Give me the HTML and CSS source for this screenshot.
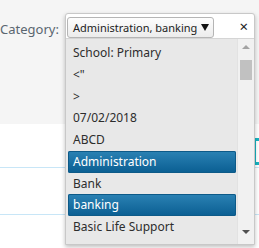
FILE: index.html
```html
<!DOCTYPE html>
<html lang="en">
<head>
    <meta charset="UTF-8">
    <title>Category</title>
    <link rel="stylesheet" href="styles.css">
</head>
<body>
    <div class="page">
        <div class="top">
            <label class="field-label" for="category">Category:</label>
            <div class="picker" id="category">
                <div class="picker-head">
                    <button class="picker-value" type="button">Administration, banking<span class="caret"></span></button>
                    <span class="picker-close">&#215;</span>
                </div>
                <div class="picker-body">
                    <ul class="picker-list">
                        <li>School: Primary</li>
                        <li>&lt;"</li>
                        <li>&gt;</li>
                        <li>07/02/2018</li>
                        <li>ABCD</li>
                        <li class="selected">Administration</li>
                        <li>Bank</li>
                        <li class="selected">banking</li>
                        <li>Basic Life Support</li>
                    </ul>
                    <div class="scrollbar">
                        <span class="arrow up"></span>
                        <span class="thumb"></span>
                        <span class="arrow down"></span>
                    </div>
                </div>
            </div>
        </div>
        <div class="row row-first"><span class="teal-box"></span></div>
        <div class="row row-second"></div>
        <div class="row"></div>
    </div>
</body>
</html>
```

FILE: styles.css
```css
body {
    margin: 0;
    padding: 0;
    background: #fff;
    font-family: "Noto Sans", "Open Sans", sans-serif;
}
.page {
    position: relative;
}
.top {
    position: relative;
    height: 124px;
    background: #f5f5f5;
}
.field-label {
    display: block;
    width: 56px;
    padding-top: 20px;
    text-align: right;
    font-size: 13px;
    color: #5a6670;
}
.picker {
    position: absolute;
    left: 65px;
    top: 13px;
    width: 188px;
    z-index: 2;
    background: #fff;
    border: 1px solid #c8c8c8;
    border-radius: 3px 3px 0 0;
    box-shadow: 0 2px 4px rgba(0, 0, 0, 0.25);
}
.picker-head {
    display: flex;
    align-items: center;
    justify-content: space-between;
    height: 24px;
    padding: 0 0 0 1px;
}
.picker-value {
    display: flex;
    align-items: center;
    height: 21px;
    margin-top: 3px;
    padding: 0 4px 0 5px;
    border: 1px solid #b5b5b5;
    border-radius: 3px;
    background: linear-gradient(#fdfdfd, #ececec);
    font-family: inherit;
    font-size: 11px;
    color: #222;
    line-height: 18px;
}
.caret {
    width: 0;
    height: 0;
    margin-left: 4px;
    border-left: 4px solid transparent;
    border-right: 4px solid transparent;
    border-top: 7px solid #111;
}
.picker-close {
    margin-right: 6px;
    font-size: 15px;
    color: #222;
    line-height: 1;
}
.picker-body {
    display: flex;
    height: 205px;
    background: #e8e8e8;
    border-top: 1px solid #d5d5d5;
}
.picker-list {
    flex: 1;
    margin: 0;
    padding: 3px 1px 0 2px;
    list-style: none;
}
.picker-list li {
    height: 21.75px;
    padding-left: 5px;
    font-size: 12px;
    line-height: 21.75px;
    color: #2d2d2d;
    border-radius: 2px;
}
.picker-list li.selected {
    color: #fff;
    background: linear-gradient(#2b82b4, #0a5e92);
    box-shadow: inset 0 0 0 1px #0d5a88;
}
.scrollbar {
    position: relative;
    width: 16px;
    background: #f1f1f1;
    border-left: 1px solid #e2e2e2;
}
.thumb {
    position: absolute;
    left: 2px;
    top: 21px;
    width: 12px;
    height: 20px;
    background: #c1c1c1;
}
.arrow {
    position: absolute;
    left: 4px;
    width: 0;
    height: 0;
    border-left: 4px solid transparent;
    border-right: 4px solid transparent;
}
.arrow.up {
    top: 6px;
    border-bottom: 4px solid #a3a3a3;
}
.arrow.down {
    bottom: 10px;
    border-top: 4px solid #505050;
}
.row {
    position: relative;
    height: 43px;
    border-bottom: 1px solid #c8e6f7;
}
.row-second {
    height: 46px;
}
.teal-box {
    position: absolute;
    right: -6px;
    top: 14px;
    width: 6px;
    height: 21px;
    border: 3px solid #17b3c1;
    background: #fff;
}
```
